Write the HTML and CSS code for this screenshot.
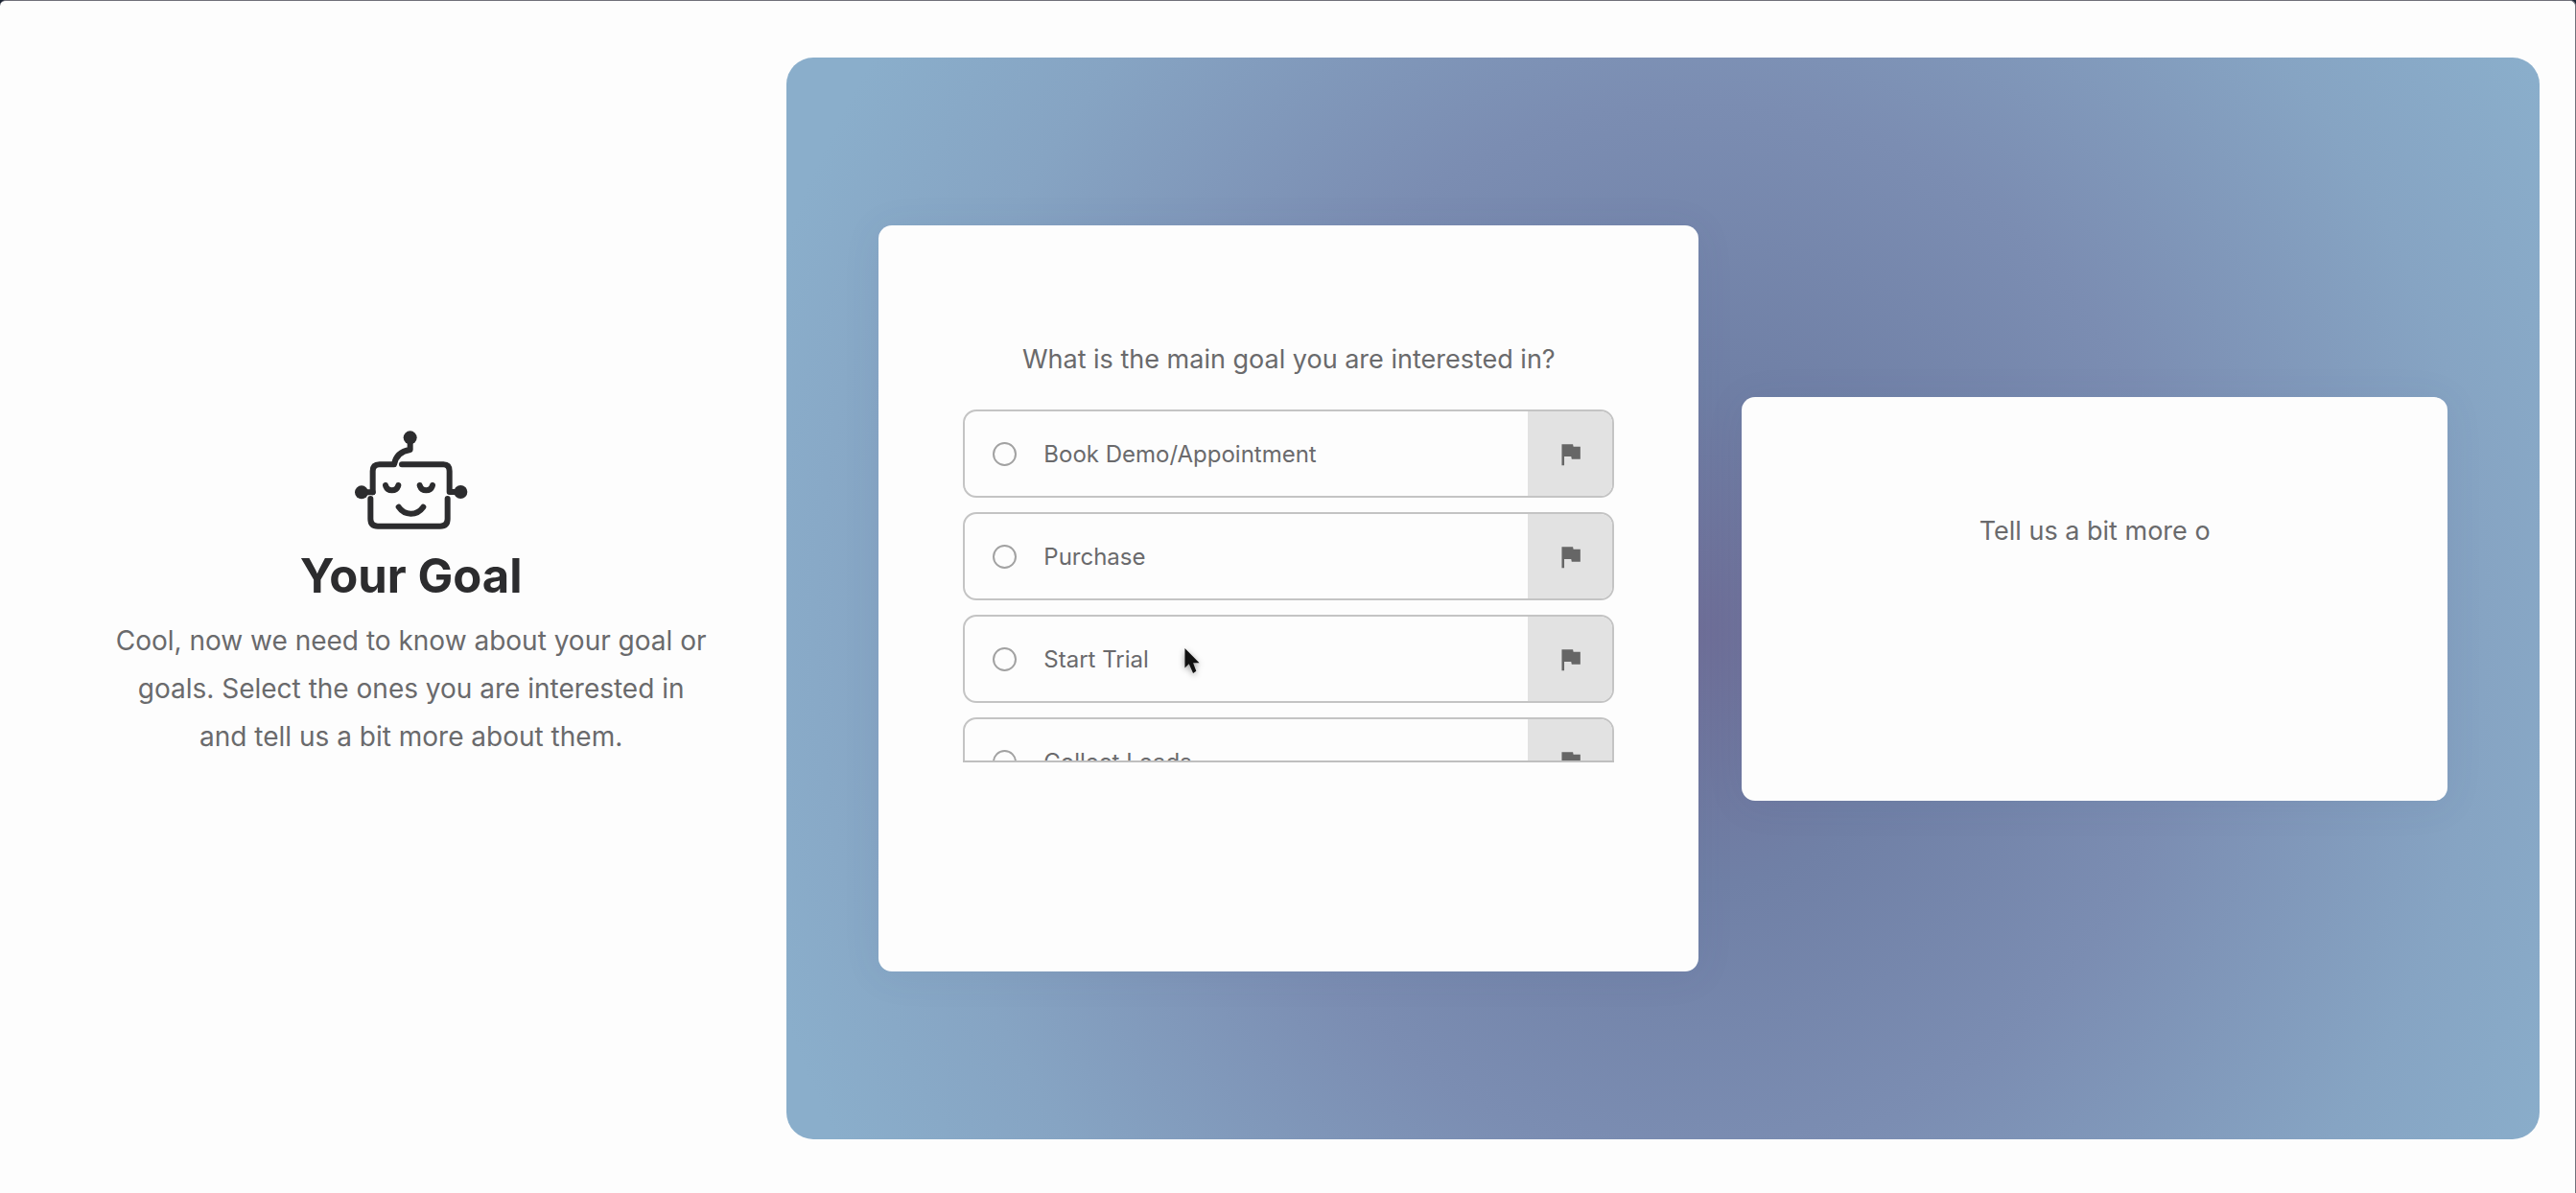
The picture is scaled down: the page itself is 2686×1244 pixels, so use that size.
FILE: index.html
```html
<!DOCTYPE html>
<html lang="en">
<head>
<meta charset="utf-8">
<title>Your Goal</title>
<link rel="stylesheet" href="styles.css">
</head>
<body>
<svg class="sprite" aria-hidden="true">
  <symbol id="flag" viewBox="0 0 24 24"><path d="M14.4 6L14 4H5v17h2v-7h5.6l.4 2h7V6z"/></symbol>
</svg>

<main class="page">
  <section class="intro">
    <svg class="robot" viewBox="54 54 360 315" aria-hidden="true">
      <g class="robot-line">
        <path d="M113 250V184Q113 163 134 163H180Q186 124 230 117V85"/>
        <path d="M204 163H334Q353 163 353 184V249H388"/>
        <path d="M77 250H113"/>
        <path d="M106 270V333Q106 356 129 356H324Q347 356 347 333V270"/>
        <path d="M153 228Q157 244 173 244Q189 244 193 228"/>
        <path d="M260 228Q264 244 280 244Q296 244 300 228"/>
        <path d="M194 296Q208 317 232 317Q256 317 271 296"/>
      </g>
      <circle cx="230" cy="79" r="21"/>
      <circle cx="78" cy="250" r="21"/>
      <circle cx="388" cy="249" r="21"/>
    </svg>
    <h1>Your Goal</h1>
    <p>Cool, now we need to know about your goal or goals. Select the ones you are interested in and tell us a bit more about them.</p>
  </section>

  <section class="panel">
    <form class="card">
      <h2 id="goal-title">What is the main goal you are interested in?</h2>
      <div class="options" role="radiogroup" aria-labelledby="goal-title">
        <label class="option">
          <input type="radio" name="goal" value="demo">
          <span class="name">Book Demo/Appointment</span>
          <span class="flag"><svg><use href="#flag"/></svg></span>
        </label>
        <label class="option">
          <input type="radio" name="goal" value="purchase">
          <span class="name">Purchase</span>
          <span class="flag"><svg><use href="#flag"/></svg></span>
        </label>
        <label class="option">
          <input type="radio" name="goal" value="trial">
          <span class="name">Start Trial</span>
          <span class="flag"><svg><use href="#flag"/></svg></span>
          <svg class="pointer" viewBox="0 0 16 26" aria-hidden="true"><path d="M1 1V20L5 16L9 25L12 23L9 15H15Z"/></svg>
        </label>
        <label class="option">
          <input type="radio" name="goal" value="leads">
          <span class="name">Collect Leads</span>
          <span class="flag"><svg><use href="#flag"/></svg></span>
        </label>
      </div>
    </form>

    <div class="card card-details">
      <h2>Tell us a bit more o</h2>
    </div>
  </section>
</main>
</body>
</html>
```
FILE: styles.css
```css
* {
  box-sizing: border-box;
}

html {
  background: #1b2433;
}

body {
  margin: 0;
  font-family: Inter, "Liberation Sans", sans-serif;
  color: #6a6a6c;
}

h1, h2, p {
  margin: 0;
}

.sprite {
  display: none;
}

.page {
  display: grid;
  grid-template-columns: 3fr 7fr;
  min-height: 100vh;
  padding: 59px 37px 56px;
  background: #fdfdfd;
  border-top: 1px solid #70707a;
  border-right: 1px solid #70707a;
  border-radius: 6px 6px 0 0;
}

/* left column */

.intro {
  display: flex;
  flex-direction: column;
  align-items: center;
  justify-content: center;
  padding: 0 80px 8px;
  text-align: center;
}

.robot {
  width: 120px;
  height: 105px;
  fill: #2c2c2e;
}

.robot-line {
  fill: none;
  stroke: #2c2c2e;
  stroke-width: 18;
  stroke-linecap: round;
  stroke-linejoin: round;
}

.intro h1 {
  margin: 12px 0 6px;
  font-size: 49px;
  line-height: 72px;
  font-weight: 700;
  color: #2c2c2e;
}

.intro p {
  font-size: 28px;
  line-height: 50px;
}

/* gradient area with the cards */

.panel {
  display: grid;
  grid-template-columns: 43fr 37fr;
  gap: 45px;
  align-items: center;
  padding: 0 96px;
  border-radius: 28px;
  background: radial-gradient(ellipse 56% 98% at 52% 53%, #6f6f98 0%, #7080a6 24%, #7b8db2 50%, #86a4c3 80%, #8aaecb 100%);
}

.card {
  padding: 118px 88px 218px;
  border-radius: 14px;
  background: #fdfdfd;
  box-shadow: 0 4px 40px rgba(60, 80, 130, .08);
}

.card-details {
  padding-bottom: 259px;
}

.card h2 {
  font-size: 27px;
  line-height: 44px;
  font-weight: 400;
  text-align: center;
}

.options {
  display: flex;
  flex-direction: column;
  gap: 15px;
  height: 368px;
  margin-top: 30px;
  border-bottom: 2px solid #bfbfbf;
  overflow: hidden;
}

.option {
  position: relative;
  display: flex;
  flex: none;
  align-items: center;
  height: 92px;
  padding-left: 29px;
  border: 2px solid #c4c4c4;
  border-radius: 14px;
  overflow: hidden;
  font-size: 24px;
}

.option input {
  appearance: none;
  width: 25px;
  height: 25px;
  margin: 0 28px 0 0;
  border: 2px solid #a2a2a2;
  border-radius: 50%;
}

.option input:checked {
  background: #68686a;
}

.name {
  flex: 1;
}

.flag {
  display: flex;
  align-items: center;
  justify-content: center;
  align-self: stretch;
  width: 88px;
  background: #e2e2e2;
}

.flag svg {
  width: 31px;
  height: 31px;
  fill: #666;
}

.pointer {
  position: absolute;
  left: 228px;
  top: 32px;
  width: 18px;
  height: 28px;
  fill: #111;
  filter: drop-shadow(0 2px 3px rgba(0, 0, 0, .4));
}
```
